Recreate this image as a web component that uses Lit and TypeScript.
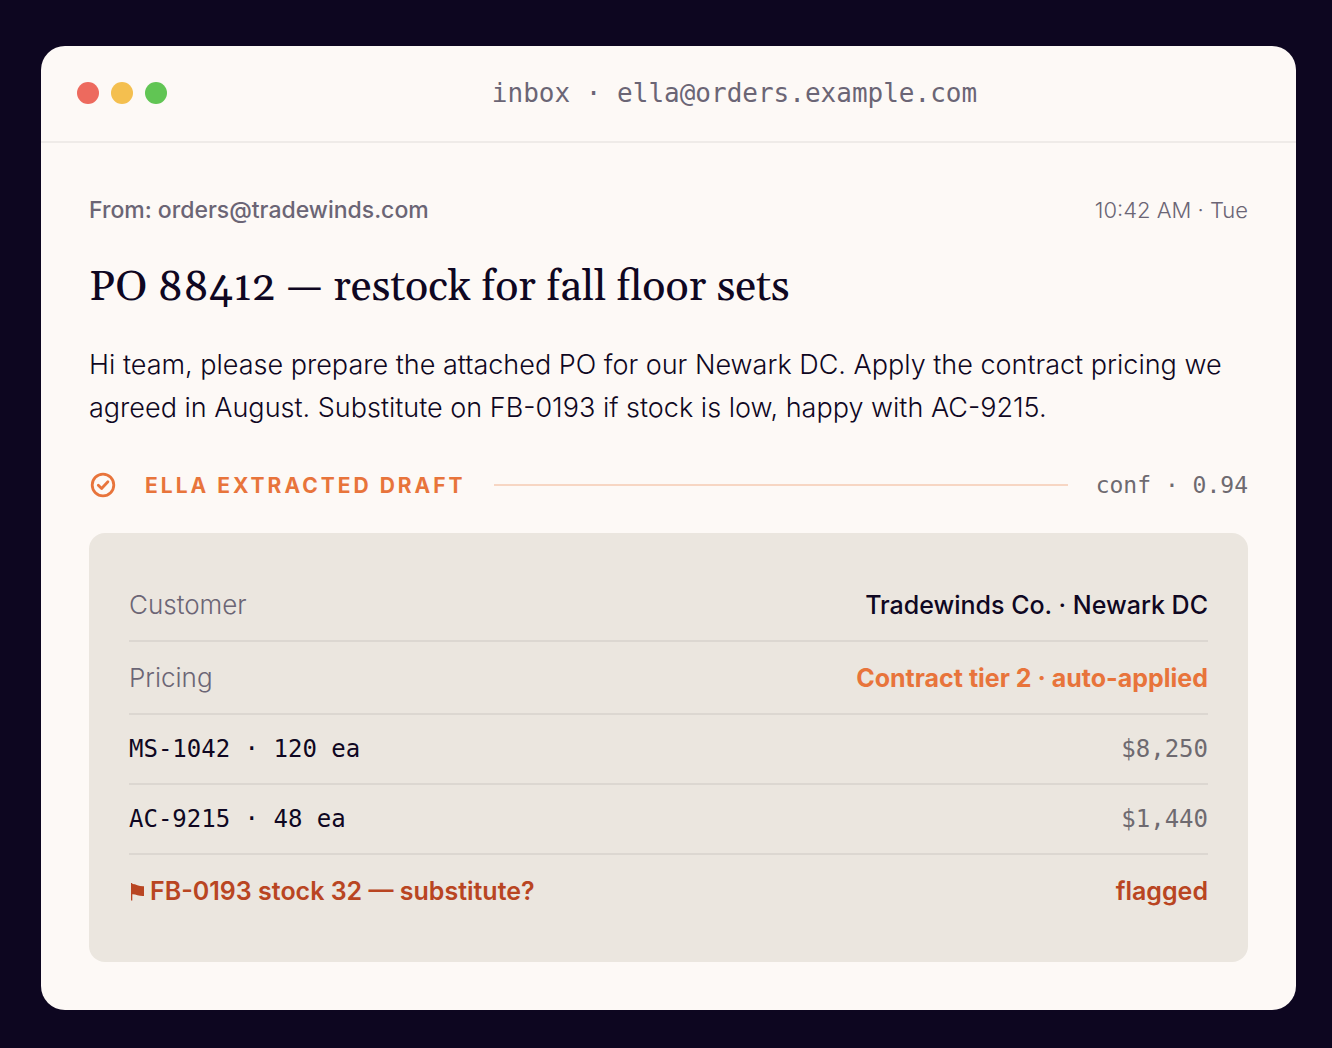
import { LitElement, html, css } from "lit";
import { customElement } from "lit/decorators.js";

interface Line {
  label: string;
  value: string;
  kind: string;
}

const LINES: Line[] = [
  { label: "Customer", value: "Tradewinds Co. · Newark DC", kind: "customer" },
  { label: "Pricing", value: "Contract tier 2 · auto-applied", kind: "pricing" },
  { label: "MS-1042 · 120 ea", value: "$8,250", kind: "item" },
  { label: "AC-9215 · 48 ea", value: "$1,440", kind: "item" },
  { label: "FB-0193 stock 32 — substitute?", value: "flagged", kind: "flag" },
];

@customElement("app-root")
export class AppRoot extends LitElement {
  static styles = css`
    :host {
      display: block;
      box-sizing: border-box;
      min-height: 100vh;
      padding: 46px 36px 38px 41px;
      background: #0d0620;
      color: #0f0722;
      font-family: Inter, "Liberation Sans", sans-serif;
    }
    * { box-sizing: border-box; }
    .window {
      background: #fdf9f6;
      border-radius: 24px;
      overflow: hidden;
    }
    .bar {
      display: flex;
      align-items: center;
      height: 97px;
      padding: 0 36px 2px;
      border-bottom: 2px solid #efebe8;
    }
    .dots { display: flex; gap: 12px; }
    .dot { width: 22px; height: 22px; border-radius: 50%; }
    .red { background: #ed6a5e; }
    .yellow { background: #f4bf4f; }
    .green { background: #61c554; }
    .title {
      flex: 1;
      text-align: center;
      padding-left: 42px;
      color: #6b6575;
      font: 26px/32px "DejaVu Sans Mono", monospace;
    }
    .mail { padding: 48px; }
    .meta {
      display: flex;
      justify-content: space-between;
      font-size: 23px;
      line-height: 38px;
      color: #6b6575;
    }
    .from { font-weight: 500; }
    .time { font-size: 22px; font-weight: 350; }
    h1 {
      margin: 29px 0 0;
      font: 400 43px/60px Georgia, Gelasio, "Liberation Serif", serif;
    }
    .body { margin: 25px 0 0; font-size: 27px; font-weight: 330; line-height: 43px; }
    .extracted {
      display: flex;
      align-items: center;
      gap: 28px;
      margin-top: 40px;
      height: 32px;
    }
    .check { width: 28px; height: 28px; }
    .heading {
      margin: 0;
      color: #e8743b;
      font-size: 21px;
      font-weight: 700;
      letter-spacing: 3px;
    }
    .rule { flex: 1; height: 2px; background: #f7d6c3; }
    .conf { color: #6e6a70; font: 23px/32px "DejaVu Sans Mono", monospace; }
    .draft {
      margin-top: 32px;
      padding: 36px 40px;
      border-radius: 16px;
      background: #ebe6df;
    }
    table { width: 100%; border-collapse: separate; border-spacing: 0; }
    th, td { padding: 0; line-height: 36px; height: 73px; font-size: 25px; }
    th { text-align: left; color: #6b6575; font-size: 26px; font-weight: 350; }
    td { text-align: right; }
    tr + tr > * { border-top: 2px solid #dcd7d1; }
    .customer > * { height: 71px; }
    .customer td { font-weight: 500; }
    .pricing td { color: #e8743b; font-weight: 700; }
    .item > * { height: 70px; font-family: "DejaVu Sans Mono", monospace; font-size: 24px; font-weight: 400; }
    .item th { color: #0f0722; }
    .item td { color: #6e6a70; }
    .flag > * { color: #b94522; font-size: 25px; font-weight: 600; }
    .pennant { width: 16px; height: 18px; margin-right: 5px; vertical-align: -1px; }
  `;

  render() {
    return html`<main class="window">
      <header class="bar">
        <div class="dots"><span class="dot red"></span><span class="dot yellow"></span><span class="dot green"></span></div>
        <div class="title">inbox · ella@orders.example.com</div>
      </header>
      <article class="mail">
        <div class="meta"><span class="from">From: orders@tradewinds.com</span><time class="time">10:42 AM · Tue</time></div>
        <h1>PO 88412 — restock for fall floor sets</h1>
        <p class="body">Hi team, please prepare the attached PO for our Newark DC. Apply the contract pricing we agreed in August. Substitute on FB-0193 if stock is low, happy with AC-9215.</p>
        <div class="extracted">
          <svg class="check" viewBox="0 0 28 28" fill="none" stroke="#e8743b" stroke-width="2.8" stroke-linecap="round" stroke-linejoin="round"><circle cx="14" cy="14" r="10.8"/><path d="M9.3 14.3l3.3 3.2 6.3-6.7"/></svg>
          <h2 class="heading">ELLA EXTRACTED DRAFT</h2>
          <span class="rule"></span>
          <span class="conf">conf · 0.94</span>
        </div>
        <section class="draft"><table><tbody>
          ${LINES.map((l) => html`<tr class=${l.kind}>
            <th scope="row">${l.kind === "flag" ? html`<svg class="pennant" viewBox="0 0 16 18" fill="#b94522"><path d="M2 0h1.300v1C7 1 10 3.600 15 3.300V13C10 13.400 7 11 3.300 11.200V17.500H2z"/></svg>` : ""}${l.label}</th>
            <td>${l.value}</td></tr>`)}
        </tbody></table></section>
      </article>
    </main>`;
  }
}
